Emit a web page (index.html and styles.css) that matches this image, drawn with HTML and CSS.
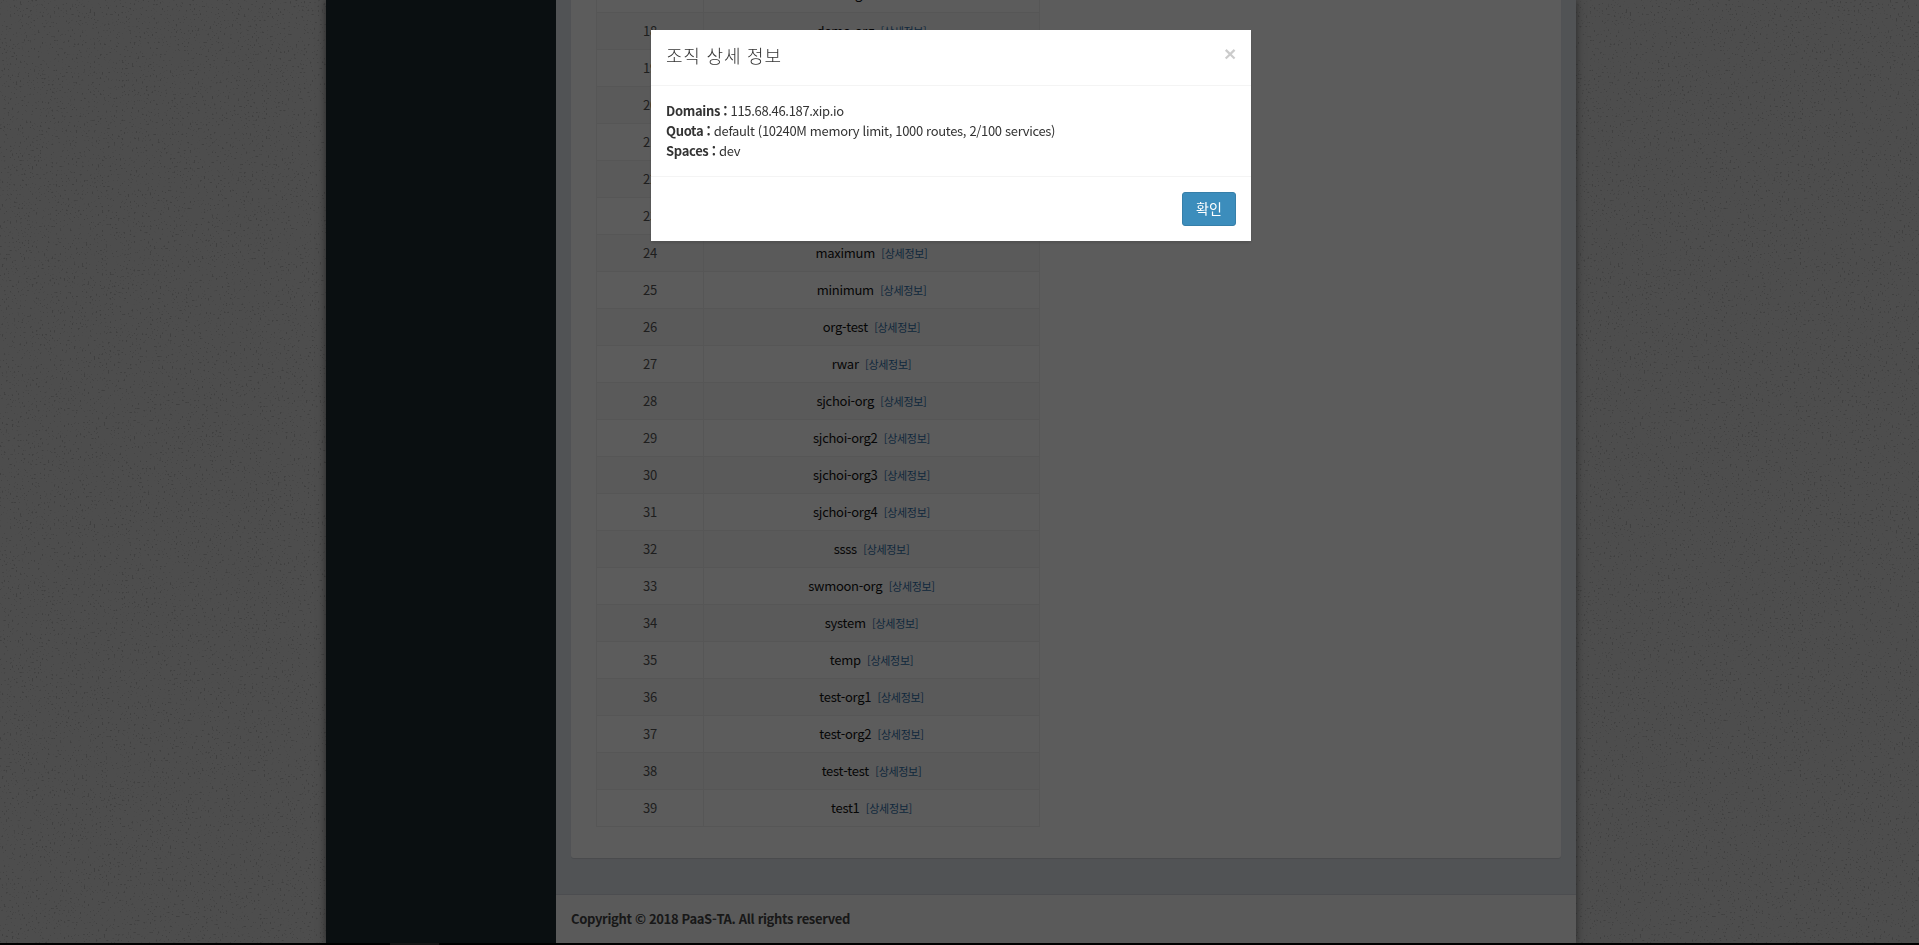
FILE: index.html
```html
<!DOCTYPE html>
<html lang="ko">
<head>
  <meta charset="UTF-8">
  <meta name="viewport" content="width=device-width, initial-scale=1.0">
  <title>조직 목록</title>
  <link rel="stylesheet" href="styles.css">
</head>
<body>
  <!-- paper texture behind the page -->
  <svg class="grain" width="1919" height="945" aria-hidden="true">
    <filter id="speckle" x="0" y="0" width="100%" height="100%" color-interpolation-filters="sRGB">
      <feTurbulence type="fractalNoise" baseFrequency="0.5" numOctaves="2" seed="7"/>
      <feColorMatrix type="matrix" values="0 0 0 0 0.7  0 0 0 0 0.7  0 0 0 0 0.7  14 0 0 0 -9.2"/>
    </filter>
    <rect width="1919" height="945" filter="url(#speckle)"/>
  </svg>

  <div class="wrapper">
    <aside class="sidebar"></aside>
    <div class="main">
      <section class="content">
        <div class="panel">
          <table class="org-table">
            <tbody>
              <tr><td>17</td><td>cf-org <a href="#">[상세정보]</a></td></tr>
              <tr><td>18</td><td>demo-org <a href="#">[상세정보]</a></td></tr>
              <tr><td>19</td><td>demo-org2 <a href="#">[상세정보]</a></td></tr>
              <tr><td>20</td><td>dev-org <a href="#">[상세정보]</a></td></tr>
              <tr><td>21</td><td>edu-org <a href="#">[상세정보]</a></td></tr>
              <tr><td>22</td><td>guest <a href="#">[상세정보]</a></td></tr>
              <tr><td>23</td><td>hello <a href="#">[상세정보]</a></td></tr>
              <tr><td>24</td><td>maximum <a href="#">[상세정보]</a></td></tr>
              <tr><td>25</td><td>minimum <a href="#">[상세정보]</a></td></tr>
              <tr><td>26</td><td>org-test <a href="#">[상세정보]</a></td></tr>
              <tr><td>27</td><td>rwar <a href="#">[상세정보]</a></td></tr>
              <tr><td>28</td><td>sjchoi-org <a href="#">[상세정보]</a></td></tr>
              <tr><td>29</td><td>sjchoi-org2 <a href="#">[상세정보]</a></td></tr>
              <tr><td>30</td><td>sjchoi-org3 <a href="#">[상세정보]</a></td></tr>
              <tr><td>31</td><td>sjchoi-org4 <a href="#">[상세정보]</a></td></tr>
              <tr><td>32</td><td>ssss <a href="#">[상세정보]</a></td></tr>
              <tr><td>33</td><td>swmoon-org <a href="#">[상세정보]</a></td></tr>
              <tr><td>34</td><td>system <a href="#">[상세정보]</a></td></tr>
              <tr><td>35</td><td>temp <a href="#">[상세정보]</a></td></tr>
              <tr><td>36</td><td>test-org1 <a href="#">[상세정보]</a></td></tr>
              <tr><td>37</td><td>test-org2 <a href="#">[상세정보]</a></td></tr>
              <tr><td>38</td><td>test-test <a href="#">[상세정보]</a></td></tr>
              <tr><td>39</td><td>test1 <a href="#">[상세정보]</a></td></tr>
            </tbody>
          </table>
        </div>
      </section>
      <footer class="main-footer"><strong>Copyright © 2018 PaaS-TA. All rights reserved</strong></footer>
    </div>
  </div>
  <div class="page-edge"><span class="edge-thumb"></span></div>

  <div class="backdrop"></div>

  <div class="modal">
    <div class="modal-header">
      <span class="close">×</span>
      <h4 class="modal-title">조직 상세 정보</h4>
    </div>
    <div class="modal-body">
      <div><strong>Domains :</strong> 115.68.46.187.xip.io</div>
      <div><strong>Quota :</strong> default (10240M memory limit, 1000 routes, 2/100 services)</div>
      <div><strong>Spaces :</strong> dev</div>
    </div>
    <div class="modal-footer">
      <button type="button" class="btn-primary">확인</button>
    </div>
  </div>
</body>
</html>
```

FILE: styles.css
```css
html, body {
  height: 100%;
  margin: 0;
  overflow: hidden;
}
body {
  display: flex;
  flex-direction: column;
  background-color: #d4d4d4;
  font-family: "Noto Sans CJK KR", "Noto Sans", sans-serif;
  font-size: 13px;
  line-height: 20px;
  letter-spacing: -.33px;
  color: #333;
}
.grain {
  position: absolute;
  top: 0;
  left: 0;
}
.wrapper {
  position: relative;
  display: flex;
  flex: 1;
  min-height: 0;
  width: 1250px;
  margin-left: 326px;
  overflow: hidden;
  background-color: #e1e6ec;
  box-shadow: 0 0 8px rgba(0, 0, 0, .5);
}
.sidebar {
  width: 230px;
  flex-shrink: 0;
  background-color: #1e2a2f;
}
.main {
  flex: 1;
  display: flex;
  flex-direction: column;
  justify-content: flex-end;
  min-width: 0;
}
.content {
  padding: 0 15px 36px;
}
.panel {
  background-color: #fff;
  border-radius: 3px;
  padding: 0 25px 31px;
  box-shadow: 0 1px 1px rgba(0, 0, 0, .1);
}
.org-table {
  width: 444px;
  border-collapse: collapse;
  text-align: center;
}
.org-table td {
  height: 36px;
  padding: 0;
  border: 1px solid #efefef;
  letter-spacing: -.28px;
  color: #111;
}
.org-table td:first-child {
  width: 106px;
  color: #555;
}
.org-table tr:nth-child(even) {
  background-color: #f9f9f9;
}
.org-table a {
  margin-left: 3px;
  font-size: 11px;
  letter-spacing: -.3px;
  color: #2f6ea6;
  text-decoration: none;
}
.main-footer {
  height: 50px;
  box-sizing: border-box;
  padding: 14px 15px;
  background-color: #fafafa;
  border-top: 1px solid #d2d6de;
  color: #444;
}
.page-edge {
  position: relative;
  height: 2px;
  background-color: #000;
}
.edge-thumb {
  display: block;
  width: 49px;
  height: 2px;
  margin-left: 390px;
  background-color: #3c3c3c;
}
.backdrop {
  position: fixed;
  top: 0;
  right: 0;
  bottom: 0;
  left: 0;
  background-color: rgba(0, 0, 0, .64);
}
.modal {
  position: fixed;
  top: 30px;
  left: 651px;
  width: 600px;
  background-color: #fff;
  box-shadow: 0 2px 3px rgba(0, 0, 0, .125);
}
.modal-header {
  padding: 13px 15px 17px;
  border-bottom: 1px solid #f4f4f4;
}
.modal-title {
  margin: 0;
  font-size: 18px;
  font-weight: 300;
  line-height: 25px;
  letter-spacing: .8px;
}
.close {
  float: right;
  margin-top: 0;
  font-family: "Liberation Sans", sans-serif;
  font-size: 21px;
  font-weight: 700;
  line-height: 1;
  color: #000;
  opacity: .2;
}
.modal-body {
  padding: 15px;
}
.modal-footer {
  display: flex;
  justify-content: flex-end;
  padding: 15px;
  border-top: 1px solid #f4f4f4;
}
.btn-primary {
  height: 34px;
  width: 54px;
  padding: 0 0 2px;
  border: 1px solid #367fa9;
  border-radius: 3px;
  background-color: #3c8dbc;
  color: #fff;
  font-family: inherit;
  font-size: 14px;
}
```
